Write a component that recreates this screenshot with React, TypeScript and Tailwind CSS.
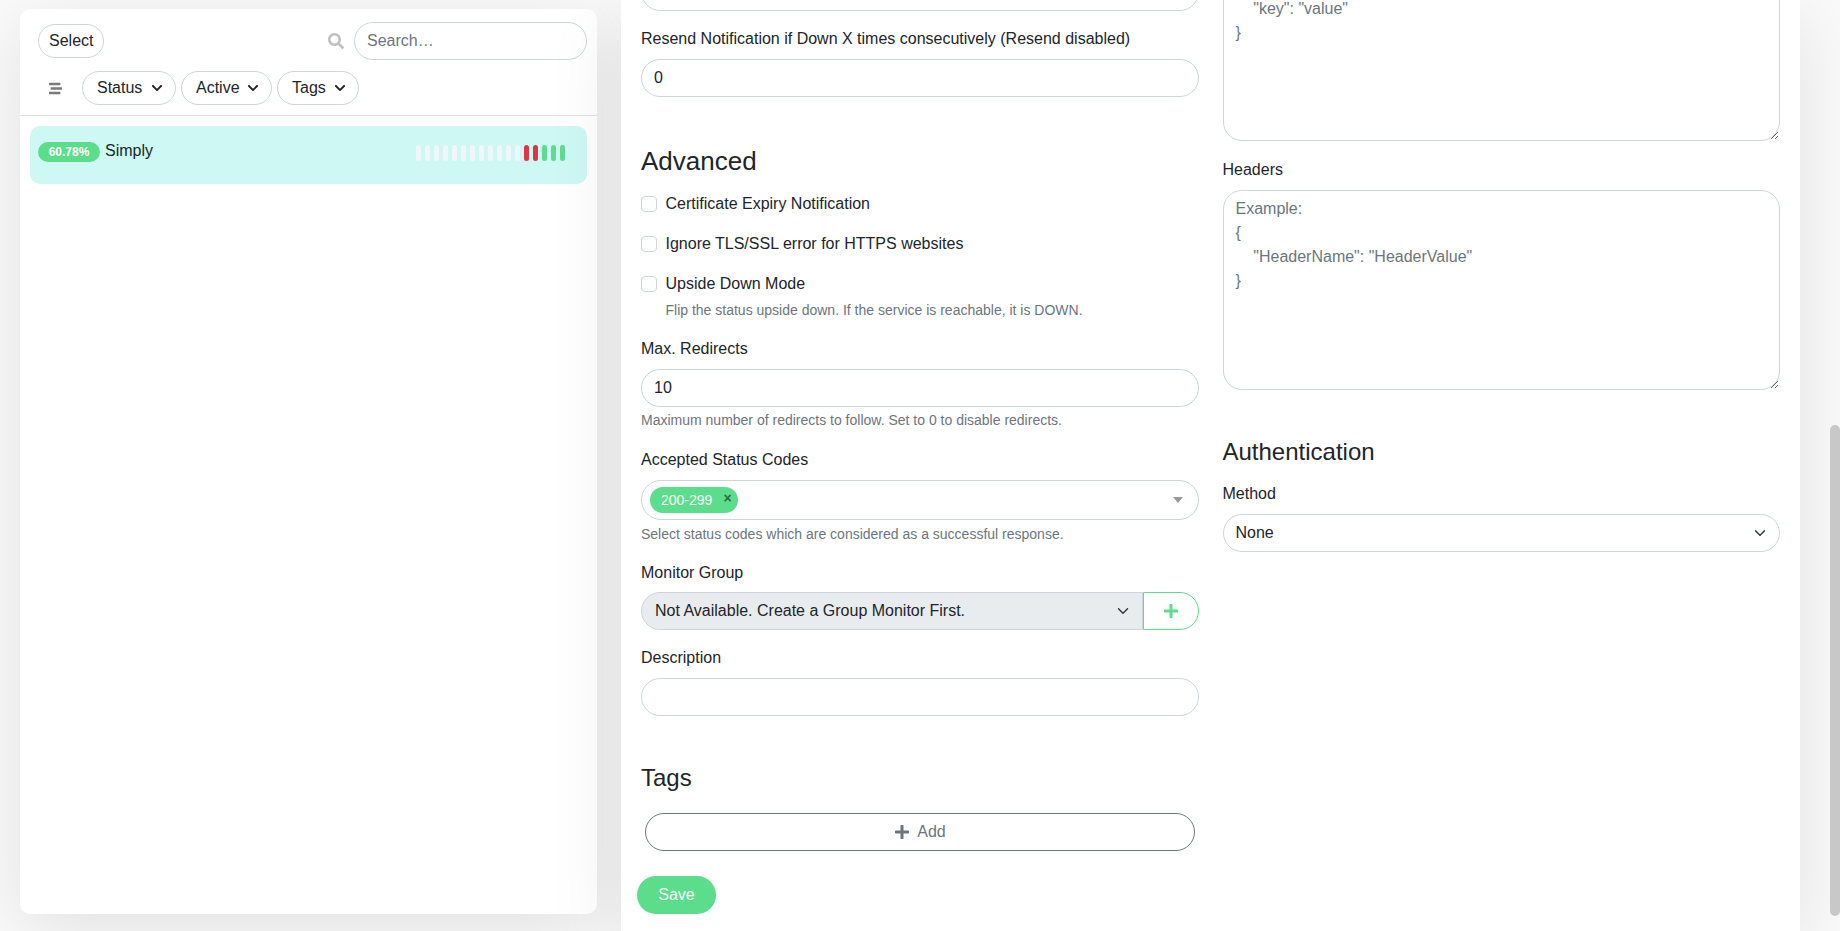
import { FaChevronDown, FaPlus, FaSearch, FaStream } from "react-icons/fa";

const inputClass =
  "block h-[38px] w-full rounded-[19px] border border-[#ced4da] bg-white px-3 text-base text-[#212529] outline-none placeholder:text-[#6c757d]";
const textareaClass =
  "block w-full rounded-[19px] border border-[#ced4da] bg-white px-3 py-[6px] text-base leading-6 text-[#212529] outline-none placeholder:text-[#6c757d]";
const pillClass =
  "flex h-[34px] items-center rounded-[17px] border border-[#ced4da] bg-white text-base text-[#212529]";

const beats = [
  "empty", "empty", "empty", "empty", "empty", "empty", "empty", "empty", "empty", "empty", "empty", "empty",
  "down", "down", "up", "up", "up",
];

function Chevron() {
  return (
    <svg
      className="pointer-events-none absolute right-3 top-1/2 h-3 w-4 -translate-y-1/2"
      viewBox="0 0 16 16"
      fill="none"
      stroke="#343a40"
      strokeWidth="2"
      strokeLinecap="round"
      strokeLinejoin="round"
    >
      <path d="M2 5l6 6 6-6" />
    </svg>
  );
}

function Check({ label, help }: { label: string; help?: string }) {
  return (
    <div className="mb-4 flex gap-[8.5px]">
      <input type="checkbox" className="mt-1 h-4 w-4 appearance-none rounded-[4px] border border-[#ced4da] bg-white" />
      <div>
        <div className="leading-6 text-[#212529]">{label}</div>
        {help && <div className="mt-1 text-sm leading-[21px] text-[#6c757d]">{help}</div>}
      </div>
    </div>
  );
}

function Filter({ label, width }: { label: string; width: string }) {
  return (
    <button className={`${pillClass} ${width} justify-between pl-[14px] pr-[12px]`}>
      {label}
      <FaChevronDown className="h-3 w-3 text-[#212529]" />
    </button>
  );
}

export default function App() {
  return (
    <div className="flex h-[931px] w-[1840px] overflow-hidden bg-[#fafafa] font-['Liberation_Sans',sans-serif] text-base text-[#212529]">
      {/* Monitor list */}
      <div className="ml-5 mt-[9px] h-[905px] w-[577px] shrink-0 rounded-[10px] bg-white shadow-[0_15px_70px_rgba(0,0,0,0.1)]">
        <div className="border-b border-[#dee2e6] pb-[10px] pl-[18px] pr-[10px] pt-[13px]">
          <div className="flex items-center justify-between">
            <button className={`${pillClass} px-[10px]`}>Select</button>
            <div className="flex items-center gap-[10px]">
              <FaSearch className="h-4 w-4 text-[#c0c0c0]" />
              <input className={`${inputClass} !w-[233px]`} placeholder="Search…" readOnly />
            </div>
          </div>
          <div className="mt-[11px] flex items-center gap-[5px]">
            <FaStream className="ml-[11px] mr-[15px] h-[13px] w-[13px] text-[#7a7a7a]" />
            <Filter label="Status" width="w-[94px]" />
            <Filter label="Active" width="w-[91px]" />
            <Filter label="Tags" width="w-[82px]" />
          </div>
        </div>
        <div className="mx-[10px] mt-[10px] flex h-[58px] items-start rounded-[10px] bg-[#cdf8f4] pl-2 pr-[22px] pt-3">
          <span className="mt-1 flex h-5 w-[62px] items-center justify-center rounded-[10px] bg-[#5cdd8b] text-xs font-bold text-white">
            60.78%
          </span>
          <span className="ml-[5px] mt-px leading-6">Simply</span>
          <div className="ml-auto mt-[7px] flex gap-1">
            {beats.map((b, i) => (
              <div
                key={i}
                className={`h-4 w-[5px] rounded-[3px] ${
                  b === "empty" ? "bg-[#eff7fd]" : b === "down" ? "bg-[#dc3545]" : "bg-[#5cdd8b]"
                }`}
              />
            ))}
          </div>
        </div>
      </div>

      {/* Edit form, scrolled down */}
      <div className="ml-6 h-[931px] w-[1179px] shrink-0 overflow-hidden bg-white px-5 shadow-[0_15px_70px_rgba(0,0,0,0.1)]">
        <div className="relative -mt-[27px] grid grid-cols-2 gap-x-6">
          <div>
            <input className={`${inputClass} mb-4`} readOnly />
            <label className="mb-2 block leading-6">Resend Notification if Down X times consecutively (Resend disabled)</label>
            <input className={inputClass} value="0" readOnly />

            <h2 className="mb-[15px] mt-[49px] text-[26px] leading-[31px]">Advanced</h2>
            <Check label="Certificate Expiry Notification" />
            <Check label="Ignore TLS/SSL error for HTTPS websites" />
            <Check label="Upside Down Mode" help="Flip the status upside down. If the service is reachable, it is DOWN." />

            <label className="mb-2 block leading-6">Max. Redirects</label>
            <input className={inputClass} value="10" readOnly />
            <div className="mt-[3px] text-sm leading-[21px] text-[#6c757d]">Maximum number of redirects to follow. Set to 0 to disable redirects.</div>

            <label className="mb-2 mt-[17px] block leading-6">Accepted Status Codes</label>
            <div className="flex h-10 items-center justify-between rounded-[20px] border border-[#ced4da] bg-white pl-2 pr-[15px]">
              <span className="flex h-[26px] w-[88px] items-center rounded-[13px] bg-[#5cdd8b] pl-[11px] text-sm text-white">
                200-299
                <span className="relative -top-[2px] ml-[11px] text-sm font-bold leading-none text-[#266d4d]">×</span>
              </span>
              <svg width="10" height="6" viewBox="0 0 10 6"><path d="M0 0h10L5 6z" fill="#999" /></svg>
            </div>
            <div className="mt-1 text-sm leading-[21px] text-[#6c757d]">Select status codes which are considered as a successful response.</div>

            <label className="mb-[7px] mt-4 block leading-6">Monitor Group</label>
            <div className="flex">
              <div className="relative flex-1">
                <select disabled className="block h-[38px] w-full appearance-none rounded-l-[19px] border border-[#ced4da] bg-[#e9ecef] pl-[13px] pr-3 text-base text-[#212529] opacity-100 outline-none">
                  <option>Not Available. Create a Group Monitor First.</option>
                </select>
                <Chevron />
              </div>
              <button className="flex h-[38px] w-[56px] items-center justify-center rounded-r-[19px] border border-[#5cdd8b] bg-white text-[#5cdd8b]">
                <FaPlus className="h-4 w-4" />
              </button>
            </div>

            <label className="mb-2 mt-4 block leading-6">Description</label>
            <input className={inputClass} readOnly />

            <h2 className="mb-[21px] mt-[47px] text-2xl leading-[29px]">Tags</h2>
            <button className="mx-1 flex h-[38px] w-[550px] items-center justify-center gap-[7px] rounded-[19px] border border-[#6c757d] bg-white text-[#6c757d]">
              <FaPlus className="h-4 w-4" />
              Add
            </button>
            <button className="-ml-1 mt-[25px] h-[38px] w-[79px] rounded-[19px] bg-[#5cdd8b] text-white">Save</button>
          </div>

          <div className="-mt-[31px]">
            <textarea
              className={`${textareaClass} h-[199px]`}
              placeholder={'Example:\n{\n    "key": "value"\n}'}
              readOnly
            />
            <label className="mb-2 mt-[17px] block leading-6">Headers</label>
            <textarea
              className={`${textareaClass} h-[200px]`}
              placeholder={'Example:\n{\n    "HeaderName": "HeaderValue"\n}'}
              readOnly
            />
            <h2 className="mb-4 mt-[47px] text-2xl leading-[29px]">Authentication</h2>
            <label className="mb-2 block leading-6">Method</label>
            <div className="relative">
              <select className="block h-[38px] w-full appearance-none rounded-[19px] border border-[#ced4da] bg-white px-3 text-base text-[#212529] outline-none">
                <option>None</option>
              </select>
              <Chevron />
            </div>
          </div>
        </div>
      </div>

      {/* Scrollbar */}
      <div className="ml-auto w-[10px] pt-[425px]">
        <div className="h-[491px] rounded-[5px] bg-[#c8c8c8]" />
      </div>
    </div>
  );
}
